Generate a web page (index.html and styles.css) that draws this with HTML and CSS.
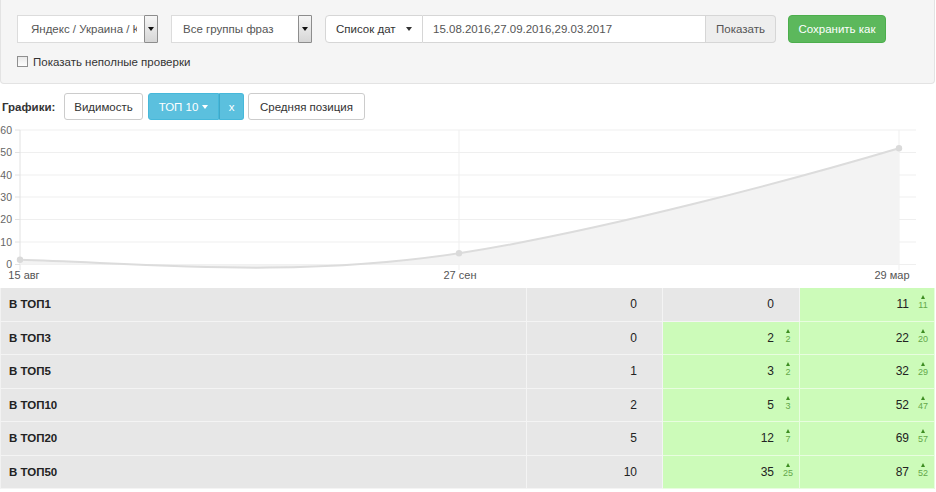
FILE: index.html
```html
<!DOCTYPE html>
<html lang="ru">
<head>
<meta charset="utf-8">
<title>Отчёт</title>
<link rel="stylesheet" href="styles.css">
</head>
<body>
<div class="panel">
  <div class="row1">
    <div class="sel sel1"><span class="sel-text">Яндекс / Украина / Киев</span><span class="sel-arrow"></span></div>
    <div class="sel sel2"><span class="sel-text">Все группы фраз</span><span class="sel-arrow"></span></div>
    <div class="igroup">
      <div class="ig-drop">Список дат<span class="caret"></span></div>
      <div class="ig-input">15.08.2016,27.09.2016,29.03.2017</div>
      <div class="ig-btn">Показать</div>
    </div>
    <div class="btn-save">Сохранить как</div>
  </div>
  <div class="chk"><span class="box"></span>Показать неполные проверки</div>
</div>

<div class="charts">
  <span class="charts-label">Графики:</span>
  <span class="btn btn-w btn-vis">Видимость</span>
  <span class="bgroup">
    <span class="btn btn-b btn-b1">ТОП 10<span class="caret caret-w"></span></span><span class="btn btn-b btn-b2">x</span>
  </span>
  <span class="btn btn-w btn-avg">Средняя позиция</span>
</div>

<svg class="chart" viewBox="0 122 936 166" width="936" height="166">
  <g class="grid">
    <line x1="20" y1="130" x2="916" y2="130"/>
    <line x1="20" y1="152.5" x2="916" y2="152.5"/>
    <line x1="20" y1="175" x2="916" y2="175"/>
    <line x1="20" y1="197" x2="916" y2="197"/>
    <line x1="20" y1="219.5" x2="916" y2="219.5"/>
    <line x1="20" y1="242" x2="916" y2="242"/>
    <line x1="20" y1="264.5" x2="916" y2="264.5"/>
    <line x1="459" y1="130" x2="459" y2="270"/>
    <line x1="899" y1="130" x2="899" y2="270"/>
  </g>
  <g class="axis">
    <line x1="20" y1="130" x2="20" y2="270"/>
    <line x1="15" y1="130" x2="20" y2="130"/>
    <line x1="15" y1="152.5" x2="20" y2="152.5"/>
    <line x1="15" y1="175" x2="20" y2="175"/>
    <line x1="15" y1="197" x2="20" y2="197"/>
    <line x1="15" y1="219.5" x2="20" y2="219.5"/>
    <line x1="15" y1="242" x2="20" y2="242"/>
    <line x1="15" y1="264.5" x2="20" y2="264.5"/>
  </g>
  <path class="area" d="M20,259.8 C140,263 290,279 459,253.3 C602,231 799,178 899,148.3 L899,264.5 L20,264.5 Z"/>
  <path class="line" d="M20,259.8 C140,263 290,279 459,253.3 C602,231 799,178 899,148.3"/>
  <circle class="pt" cx="20" cy="259.8" r="3.2"/>
  <circle class="pt" cx="459" cy="253.3" r="3.2"/>
  <circle class="pt" cx="899" cy="148.3" r="3.2"/>
  <g class="ylab">
    <text x="12" y="133.5">60</text>
    <text x="12" y="156">50</text>
    <text x="12" y="178.5">40</text>
    <text x="12" y="200.5">30</text>
    <text x="12" y="223">20</text>
    <text x="12" y="245.5">10</text>
    <text x="12" y="268">0</text>
  </g>
  <g class="xlab">
    <text x="24" y="279">15 авг</text>
    <text x="460" y="279">27 сен</text>
    <text x="892" y="279">29 мар</text>
  </g>
</svg>

<div class="stats">
  <div class="c lbl">В ТОП1</div>
  <div class="c"><span>0</span><span class="delta"></span></div>
  <div class="c"><span>0</span><span class="delta"></span></div>
  <div class="c up"><span>11</span><span class="delta"><i class="tri"></i>11</span></div>

  <div class="c lbl">В ТОП3</div>
  <div class="c"><span>0</span><span class="delta"></span></div>
  <div class="c up"><span>2</span><span class="delta"><i class="tri"></i>2</span></div>
  <div class="c up"><span>22</span><span class="delta"><i class="tri"></i>20</span></div>

  <div class="c lbl">В ТОП5</div>
  <div class="c"><span>1</span><span class="delta"></span></div>
  <div class="c up"><span>3</span><span class="delta"><i class="tri"></i>2</span></div>
  <div class="c up"><span>32</span><span class="delta"><i class="tri"></i>29</span></div>

  <div class="c lbl">В ТОП10</div>
  <div class="c"><span>2</span><span class="delta"></span></div>
  <div class="c up"><span>5</span><span class="delta"><i class="tri"></i>3</span></div>
  <div class="c up"><span>52</span><span class="delta"><i class="tri"></i>47</span></div>

  <div class="c lbl">В ТОП20</div>
  <div class="c"><span>5</span><span class="delta"></span></div>
  <div class="c up"><span>12</span><span class="delta"><i class="tri"></i>7</span></div>
  <div class="c up"><span>69</span><span class="delta"><i class="tri"></i>57</span></div>

  <div class="c lbl">В ТОП50</div>
  <div class="c"><span>10</span><span class="delta"></span></div>
  <div class="c up"><span>35</span><span class="delta"><i class="tri"></i>25</span></div>
  <div class="c up"><span>87</span><span class="delta"><i class="tri"></i>52</span></div>
</div>
</body>
</html>
```
FILE: styles.css
```css
html, body {
  margin: 0;
  padding: 0;
  background: #fff;
}
body {
  width: 936px;
  font-family: "Liberation Sans", Arial, sans-serif;
  font-size: 11.5px;
  color: #333;
}

/* top filter panel */
.panel {
  width: 935px;
  height: 84px;
  box-sizing: border-box;
  background: #f5f5f5;
  border: 1px solid #e3e3e3;
  border-top: 0;
  border-radius: 0 0 4px 4px;
  padding: 15px 16px 0;
}
.row1 {
  display: flex;
  align-items: center;
  height: 28px;
}
.sel {
  width: 141px;
  height: 28px;
  box-sizing: border-box;
  background: #fff;
  border: 1px solid #dcdcdc;
  display: flex;
  align-items: center;
  margin-right: 13px;
}
.sel-text {
  flex: 1;
  min-width: 0;
  overflow: hidden;
  white-space: nowrap;
  color: #555;
  margin-right: 7px;
  padding-left: 13px;
}
.sel2 .sel-text { padding-left: 11px; }
.sel-arrow {
  align-self: stretch;
  width: 14px;
  margin: -1px -1px -1px 0;
  box-sizing: border-box;
  border: 1px solid #8d8d8d;
  border-radius: 1px;
  background: linear-gradient(#f6f6f6, #d6d6d6);
  display: flex;
  align-items: center;
  justify-content: center;
}
.sel-arrow::after {
  content: "";
  width: 0;
  height: 0;
  border-left: 3px solid transparent;
  border-right: 3px solid transparent;
  border-top: 4px solid #111;
}
.igroup {
  display: flex;
  height: 28px;
}
.ig-drop, .ig-input, .ig-btn {
  box-sizing: border-box;
  height: 28px;
  display: flex;
  align-items: center;
  border: 1px solid #d6d6d6;
}
.ig-drop {
  width: 98px;
  padding-left: 10px;
  background: #fff;
  color: #333;
  border-radius: 4px 0 0 4px;
}
.caret {
  display: inline-block;
  width: 0;
  height: 0;
  margin-left: 10px;
  border-left: 3.5px solid transparent;
  border-right: 3.5px solid transparent;
  border-top: 4px solid #333;
}
.ig-input {
  width: 283px;
  padding-left: 10px;
  background: #fff;
  color: #555;
  border-left: 0;
}
.ig-btn {
  width: 70px;
  justify-content: center;
  background: #eeeeee;
  color: #555;
  border-left: 0;
  border-radius: 0 4px 4px 0;
}
.btn-save {
  margin-left: 12px;
  width: 98px;
  height: 28px;
  box-sizing: border-box;
  display: flex;
  align-items: center;
  justify-content: center;
  background: #5cb85c;
  border: 1px solid #4cae4c;
  border-radius: 4px;
  color: #fff;
}
.chk {
  margin-top: 11px;
  height: 15px;
  display: flex;
  align-items: center;
  color: #333;
}
.chk .box {
  width: 11px;
  height: 11px;
  box-sizing: border-box;
  border: 1px solid #8f8f8f;
  background: linear-gradient(#e9e9e9, #fdfdfd);
  margin-right: 5px;
}

/* chart toggles */
.charts {
  display: flex;
  align-items: center;
  height: 27px;
  margin-top: 9px;
}
.charts-label {
  width: 64px;
  padding-left: 2px;
  box-sizing: border-box;
  font-weight: bold;
  color: #333;
}
.btn {
  height: 27px;
  box-sizing: border-box;
  display: inline-flex;
  align-items: center;
  justify-content: center;
  border: 1px solid #ccc;
  border-radius: 3px;
}
.btn-w {
  background: #fff;
  color: #333;
}
.btn-vis { width: 79px; }
.btn-avg { width: 117px; margin-left: 4px; }
.bgroup {
  display: inline-flex;
  margin-left: 5px;
}
.btn-b {
  background: #5bc0de;
  border-color: #46b8da;
  color: #fff;
}
.btn-b1 {
  width: 71px;
  border-radius: 3px 0 0 3px;
}
.btn-b2 {
  width: 25px;
  border-left-color: #3fa9c9;
  border-radius: 0 3px 3px 0;
}
.caret-w {
  border-top-color: #fff;
  margin-left: 4px;
}

/* chart */
.chart {
  display: block;
  margin-top: 2px;
}
.grid line {
  stroke: #efefef;
  stroke-width: 1;
}
.axis line {
  stroke: #e2e2e2;
  stroke-width: 1;
}
.area {
  fill: #f3f3f3;
}
.line {
  fill: none;
  stroke: #dcdcdc;
  stroke-width: 2;
}
.pt {
  fill: #dadada;
}
.ylab text {
  font-family: "Liberation Sans", Arial, sans-serif;
  font-size: 10.5px;
  fill: #666;
  text-anchor: end;
}
.xlab text {
  font-family: "Liberation Sans", Arial, sans-serif;
  font-size: 11px;
  fill: #555;
  text-anchor: middle;
}

/* stats table */
.stats {
  display: grid;
  grid-template-columns: 527px 136px 137px 135px;
  grid-auto-rows: 33.5px;
}
.c {
  box-sizing: border-box;
  background: #e7e7e7;
  border-bottom: 1px solid rgba(255, 255, 255, 0.55);
  border-right: 1px solid rgba(255, 255, 255, 0.55);
  display: flex;
  align-items: center;
  justify-content: flex-end;
  padding-right: 3px;
  font-size: 12px;
  color: #222;
}
.c.lbl {
  justify-content: flex-start;
  padding-left: 8px;
  font-size: 11.5px;
  font-weight: bold;
  border-left: 1px solid #f2f2f2;
}
.c.up {
  background: #ccfbb9;
}
.delta {
  width: 16px;
  margin-left: 6px;
  margin-bottom: 4px;
  display: flex;
  flex-direction: column;
  align-items: center;
  font-size: 9px;
  line-height: 8px;
  color: #64a84a;
}
.tri {
  width: 0;
  height: 0;
  border-left: 2.5px solid transparent;
  border-right: 2.5px solid transparent;
  border-bottom: 4px solid #3d8d22;
  margin-bottom: 2px;
}
```
